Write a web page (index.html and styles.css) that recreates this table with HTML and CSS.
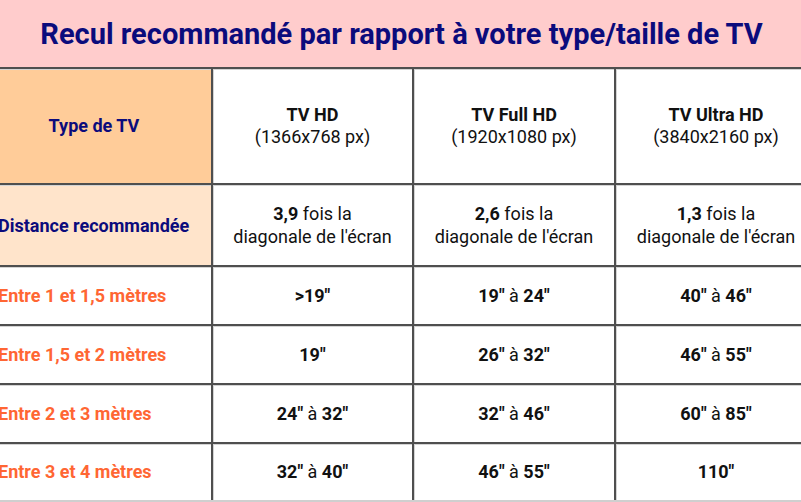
FILE: index.html
```html
<!DOCTYPE html>
<html lang="fr">
<head>
<meta charset="utf-8">
<title>Recul recommandé</title>
<link rel="stylesheet" href="styles.css">
</head>
<body>
<div class="title">
  <h1>Recul recommandé par rapport à votre type/taille de TV</h1>
</div>
<div class="wrap">
  <div class="grid">
    <div class="cell head-type r1">Type de TV</div>
    <div class="cell r1"><div><b>TV HD</b><br>(1366x768 px)</div></div>
    <div class="cell r1"><div><b>TV Full HD</b><br>(1920x1080 px)</div></div>
    <div class="cell r1"><div><b>TV Ultra HD</b><br>(3840x2160 px)</div></div>

    <div class="cell head-dist r2">Distance recommandée</div>
    <div class="cell r2"><div><b>3,9</b> fois la<br>diagonale de l'écran</div></div>
    <div class="cell r2"><div><b>2,6</b> fois la<br>diagonale de l'écran</div></div>
    <div class="cell r2"><div><b>1,3</b> fois la<br>diagonale de l'écran</div></div>

    <div class="cell label r3">Entre 1 et 1,5 mètres</div>
    <div class="cell r3"><b>&gt;19"</b></div>
    <div class="cell r3"><div><b>19"</b> à <b>24"</b></div></div>
    <div class="cell r3"><div><b>40"</b> à <b>46"</b></div></div>

    <div class="cell label r3">Entre 1,5 et 2 mètres</div>
    <div class="cell r3"><b>19"</b></div>
    <div class="cell r3"><div><b>26"</b> à <b>32"</b></div></div>
    <div class="cell r3"><div><b>46"</b> à <b>55"</b></div></div>

    <div class="cell label r3">Entre 2 et 3 mètres</div>
    <div class="cell r3"><div><b>24"</b> à <b>32"</b></div></div>
    <div class="cell r3"><div><b>32"</b> à <b>46"</b></div></div>
    <div class="cell r3"><div><b>60"</b> à <b>85"</b></div></div>

    <div class="cell label r4">Entre 3 et 4 mètres</div>
    <div class="cell r4"><div><b>32"</b> à <b>40"</b></div></div>
    <div class="cell r4"><div><b>46"</b> à <b>55"</b></div></div>
    <div class="cell r4"><b>110"</b></div>
  </div>
</div>
</body>
</html>
```

FILE: styles.css
```css
html, body {
  margin: 0;
  padding: 0;
  background: #ffffff;
  overflow: hidden;
}

body {
  font-family: Roboto, "Liberation Sans", Arial, sans-serif;
  color: #111111;
  font-size: 18px;
}

.title {
  height: 67px;
  background: #ffcccc;
  display: flex;
  align-items: center;
  justify-content: center;
}

.title h1 {
  margin: 0;
  font-size: 29px;
  font-weight: 700;
  color: #0b0b7c;
  letter-spacing: 0;
  padding-left: 2px;
}

.wrap {
  width: 801px;
  overflow: hidden;
}

.grid {
  display: grid;
  grid-template-columns: 236px 201px 202px 202px;
  grid-template-rows: 116px 82px 59px 59px 59px 58px;
  margin-left: -25px;
  width: max-content;
  border-bottom: 2px solid #cfcfcf;
}

.cell {
  box-sizing: border-box;
  border-top: 2px solid #4f4f4f;
  border-left: 2px solid #4f4f4f;
  box-shadow: inset 1px 1px 0 #d4d4d4;
  display: flex;
  align-items: center;
  justify-content: center;
  text-align: center;
  line-height: 22px;
  background: #ffffff;
}

.cell b {
  font-weight: 700;
}

.r2 {
  line-height: 23px;
}

.head-type {
  background: #ffcc99;
  color: #0b0b7c;
  font-weight: 700;
}

.head-dist {
  background: #ffe4cb;
  color: #0b0b7c;
  font-weight: 700;
  justify-content: flex-start;
  padding-left: 21px;
}

.label {
  color: #ff6633;
  font-weight: 700;
  justify-content: flex-start;
  padding-left: 21px;
}
```
